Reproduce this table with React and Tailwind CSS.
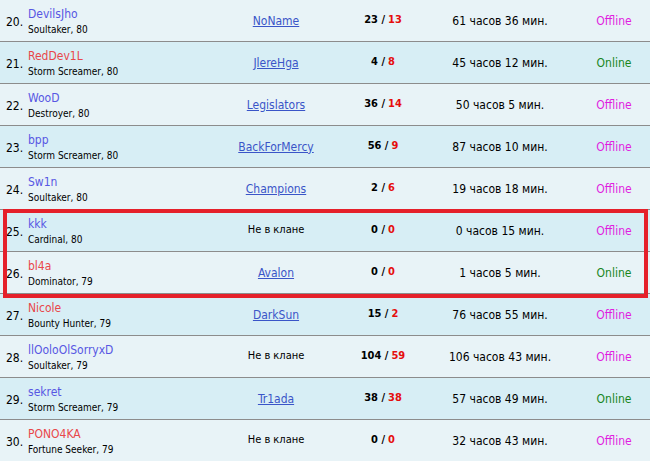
const players = [
  { n: 20, name: "DevilsJho", side: "b", cls: "Soultaker, 80", clan: "NoName", k: "23", d: "13", time: "61 часов 36 мин.", on: false },
  { n: 21, name: "RedDev1L", side: "r", cls: "Storm Screamer, 80", clan: "JlereHga", k: "4", d: "8", time: "45 часов 12 мин.", on: true },
  { n: 22, name: "WooD", side: "b", cls: "Destroyer, 80", clan: "Legislators", k: "36", d: "14", time: "50 часов 5 мин.", on: false },
  { n: 23, name: "bpp", side: "b", cls: "Storm Screamer, 80", clan: "BackForMercy", k: "56", d: "9", time: "87 часов 10 мин.", on: false },
  { n: 24, name: "Sw1n", side: "b", cls: "Soultaker, 80", clan: "Champions", k: "2", d: "6", time: "19 часов 18 мин.", on: false },
  { n: 25, name: "kkk", side: "b", cls: "Cardinal, 80", clan: null, k: "0", d: "0", time: "0 часов 15 мин.", on: false },
  { n: 26, name: "bl4a", side: "r", cls: "Dominator, 79", clan: "Avalon", k: "0", d: "0", time: "1 часов 5 мин.", on: true },
  { n: 27, name: "Nicole", side: "r", cls: "Bounty Hunter, 79", clan: "DarkSun", k: "15", d: "2", time: "76 часов 55 мин.", on: false },
  { n: 28, name: "llOoloOlSorryxD", side: "b", cls: "Soultaker, 79", clan: null, k: "104", d: "59", time: "106 часов 43 мин.", on: false },
  { n: 29, name: "sekret", side: "b", cls: "Storm Screamer, 79", clan: "Tr1ada", k: "38", d: "38", time: "57 часов 49 мин.", on: true },
  { n: 30, name: "PONO4KA", side: "r", cls: "Fortune Seeker, 79", clan: null, k: "0", d: "0", time: "32 часов 43 мин.", on: false },
];

function Row({ p }) {
  return (
    <div className={`flex h-[42px] border-b border-[#8c8c8c] ${p.n % 2 ? "bg-[#d7eef5]" : "bg-[#e8f3f7]"}`}>
      <div className="flex w-[230px] shrink-0 items-center pl-[6px]">
        <span className="w-[22px] pt-[3px] text-[12px] text-black">{p.n}.</span>
        <div className="flex flex-col pt-[3px]">
          <span className={`text-[12px] leading-[16px] ${p.side === "r" ? "text-[#e8474a]" : "text-[#5757e3]"}`}>{p.name}</span>
          <span className="text-[10px] leading-[16px] text-black">{p.cls}</span>
        </div>
      </div>
      <div className="flex w-[92px] shrink-0 items-center justify-center">
        {p.clan ? (
          <a href="#" className="text-[12px] text-[#3a55c8] underline">{p.clan}</a>
        ) : (
          <span className="text-[11px] text-black">Не в клане</span>
        )}
      </div>
      <div className="flex w-[122px] shrink-0 items-center justify-center text-[11px] font-bold">
        <span className="text-black">{p.k} / </span>
        <span className="ml-[3px] text-[#e50d0d]">{p.d}</span>
      </div>
      <div className="flex w-[112px] shrink-0 items-center justify-center text-[12px] text-black">{p.time}</div>
      <div className={`flex w-[116px] shrink-0 items-center justify-center text-[12px] ${p.on ? "text-[#18861c]" : "text-[#e01ee0]"}`}>
        {p.on ? "Online" : "Offline"}
      </div>
    </div>
  );
}

export default function App() {
  return (
    <div className="relative h-[461px] w-[650px] overflow-hidden bg-[#e8f3f7] font-['Tahoma','DejaVu_Sans_Condensed','Liberation_Sans',sans-serif]">
      {players.map((p) => (
        <Row key={p.n} p={p} />
      ))}
      <div className="pointer-events-none absolute left-[3px] top-[209px] h-[89px] w-[645px] border-4 border-[#e5202a]" />
    </div>
  );
}
